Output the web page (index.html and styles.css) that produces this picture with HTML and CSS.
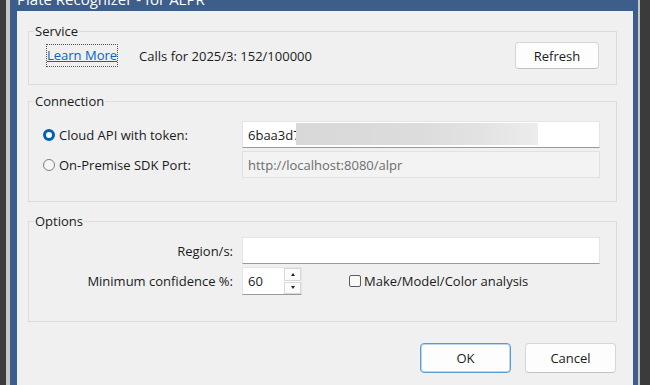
FILE: index.html
```html
<!DOCTYPE html>
<html lang="en">
<head>
    <meta charset="UTF-8">
    <title>Plate Recognizer - for ALPR</title>
    <link rel="stylesheet" href="styles.css">
</head>
<body>
    <div class="screen">
        <div class="window">
            <div class="titlebar"><span class="title">Plate Recognizer - for ALPR</span></div>
            <div class="dialog">
                <fieldset class="group group-service">
                    <legend>Service</legend>
                    <div class="service-row">
                        <a class="link" href="#">Learn More</a>
                        <span class="calls">Calls for 2025/3: 152/100000</span>
                        <button class="btn btn-refresh">Refresh</button>
                    </div>
                </fieldset>

                <fieldset class="group group-connection">
                    <legend>Connection</legend>
                    <div class="form-grid">
                        <label class="radio-label"><span class="radio checked"></span>Cloud API with token:</label>
                        <div class="textbox token"><span>6baa3d7</span><span class="blur"></span></div>
                        <label class="radio-label"><span class="radio"></span>On-Premise SDK Port:</label>
                        <div class="textbox disabled">http://localhost:8080/alpr</div>
                    </div>
                </fieldset>

                <fieldset class="group group-options">
                    <legend>Options</legend>
                    <div class="form-grid options-grid">
                        <label class="field-label">Region/s:</label>
                        <div class="textbox"></div>
                        <label class="field-label">Minimum confidence %:</label>
                        <div class="conf-row">
                            <div class="spin">
                                <span class="spin-value">60</span>
                                <div class="spin-buttons">
                                    <span class="spin-btn"><i class="arrow-up"></i></span>
                                    <span class="spin-btn"><i class="arrow-down"></i></span>
                                </div>
                            </div>
                            <label class="check-label"><span class="checkbox"></span>Make/Model/Color analysis</label>
                        </div>
                    </div>
                </fieldset>

                <div class="actions">
                    <button class="btn btn-default">OK</button>
                    <button class="btn">Cancel</button>
                </div>
            </div>
        </div>
    </div>
</body>
</html>
```

FILE: styles.css
```css
body {
    margin: 0;
    background-color: #3b3b3b;
    font-family: "Open Sans", "Noto Sans", sans-serif;
    font-size: 13px;
    color: #1b1b1b;
    overflow: hidden;
}
.screen {
    padding-left: 6px;
    height: 385px;
}
.window {
    box-sizing: border-box;
    width: 634px;
    height: 385px;
    border-left: 4px solid #c6c6c6;
    border-right: 2px solid #c6c6c6;
    background-color: #3d5e8a;
    padding: 0 5px 0 7px;
    display: flex;
    flex-direction: column;
}
.titlebar {
    height: 11px;
    overflow: hidden;
    color: white;
}
.title {
    display: block;
    font-size: 15px;
    line-height: 15px;
    margin-top: -8px;
}
.dialog {
    flex: 1;
    background-color: #f0f0f0;
    padding: 12px 16px 0 11px;
}
.group {
    margin: 0;
    padding: 0;
    border: 1px solid #dcdcdc;
    min-width: 0;
}
.group legend {
    margin-left: 5px;
    padding: 0 1px;
    line-height: 16px;
    font-size: 13px;
}
.group-connection {
    margin-top: 8px;
}
.group-options {
    margin-top: 11px;
}
.service-row {
    display: flex;
    align-items: center;
    height: 27px;
    padding: 3px 17px 15px 18px;
}
.link {
    color: #0066cc;
    text-decoration: underline;
    outline: 1px dotted #555;
    padding: 1px 0 2px 0;
}
.calls {
    margin-left: 22px;
}
.btn {
    font: inherit;
    color: #1b1b1b;
    background-color: #fdfdfd;
    border: 1px solid #d6d6d6;
    border-bottom-color: #c2c2c2;
    border-radius: 4px;
    width: 91px;
    height: 30px;
    padding: 0;
}
.btn-refresh {
    margin-left: auto;
    width: 84px;
    height: 27px;
}
.form-grid {
    display: grid;
    grid-template-columns: 213px 358px;
    grid-auto-rows: 27px;
    row-gap: 3px;
    padding: 12px 17px 23px 0;
    align-items: center;
}
.options-grid {
    grid-template-rows: 27px 28px;
    padding: 8px 17px 26px 0;
}
.radio-label {
    display: flex;
    align-items: center;
    padding-left: 14px;
}
.radio {
    box-sizing: border-box;
    width: 12px;
    height: 12px;
    border-radius: 50%;
    border: 1px solid #808080;
    background-color: #f6f6f6;
    margin-right: 4px;
}
.radio.checked {
    border: 3.5px solid #005fb8;
    background-color: white;
}
.field-label {
    text-align: right;
    padding-right: 9px;
}
.textbox {
    position: relative;
    box-sizing: border-box;
    height: 27px;
    display: flex;
    align-items: center;
    padding-left: 5px;
    background-color: white;
    border: 1px solid #e4e4e4;
    border-bottom-color: #9a9a9a;
    overflow: hidden;
}
.textbox.disabled {
    background-color: #f3f3f3;
    border-color: #e2e2e2;
    color: #6d6d6d;
}
.token .blur {
    position: absolute;
    left: 53px;
    top: 1px;
    bottom: 2px;
    width: 242px;
    background: linear-gradient(90deg, #d8d8d8, #dcdcdc 50%, #e2e2e2 75%, #ececec);
}
.conf-row {
    display: flex;
    align-items: center;
}
.spin {
    box-sizing: border-box;
    display: flex;
    width: 60px;
    height: 28px;
    background-color: white;
    border: 1px solid #e4e4e4;
    border-bottom-color: #9a9a9a;
}
.spin-value {
    flex: 1;
    display: flex;
    align-items: center;
    padding-left: 5px;
}
.spin-buttons {
    display: flex;
    flex-direction: column;
    width: 17px;
    gap: 1px;
}
.spin-btn {
    flex: 1;
    display: flex;
    align-items: center;
    justify-content: center;
    background-color: #fbfbfb;
    border: 1px solid #d8d8d8;
}
.arrow-up {
    border-left: 2.5px solid transparent;
    border-right: 2.5px solid transparent;
    border-bottom: 3px solid #222;
}
.arrow-down {
    border-left: 2.5px solid transparent;
    border-right: 2.5px solid transparent;
    border-top: 3px solid #222;
}
.check-label {
    display: flex;
    align-items: center;
    margin-left: 47px;
}
.checkbox {
    box-sizing: border-box;
    width: 12px;
    height: 12px;
    border: 1px solid #5c5c5c;
    border-radius: 2px;
    background-color: #f8f8f8;
    margin-right: 3px;
}
.actions {
    display: flex;
    justify-content: flex-end;
    gap: 14px;
    margin-top: 21px;
    padding-right: 1px;
}
.btn-default {
    border-color: #5b9bd5;
    box-shadow: inset 0 0 0 1px #b9d7f2;
}
```
